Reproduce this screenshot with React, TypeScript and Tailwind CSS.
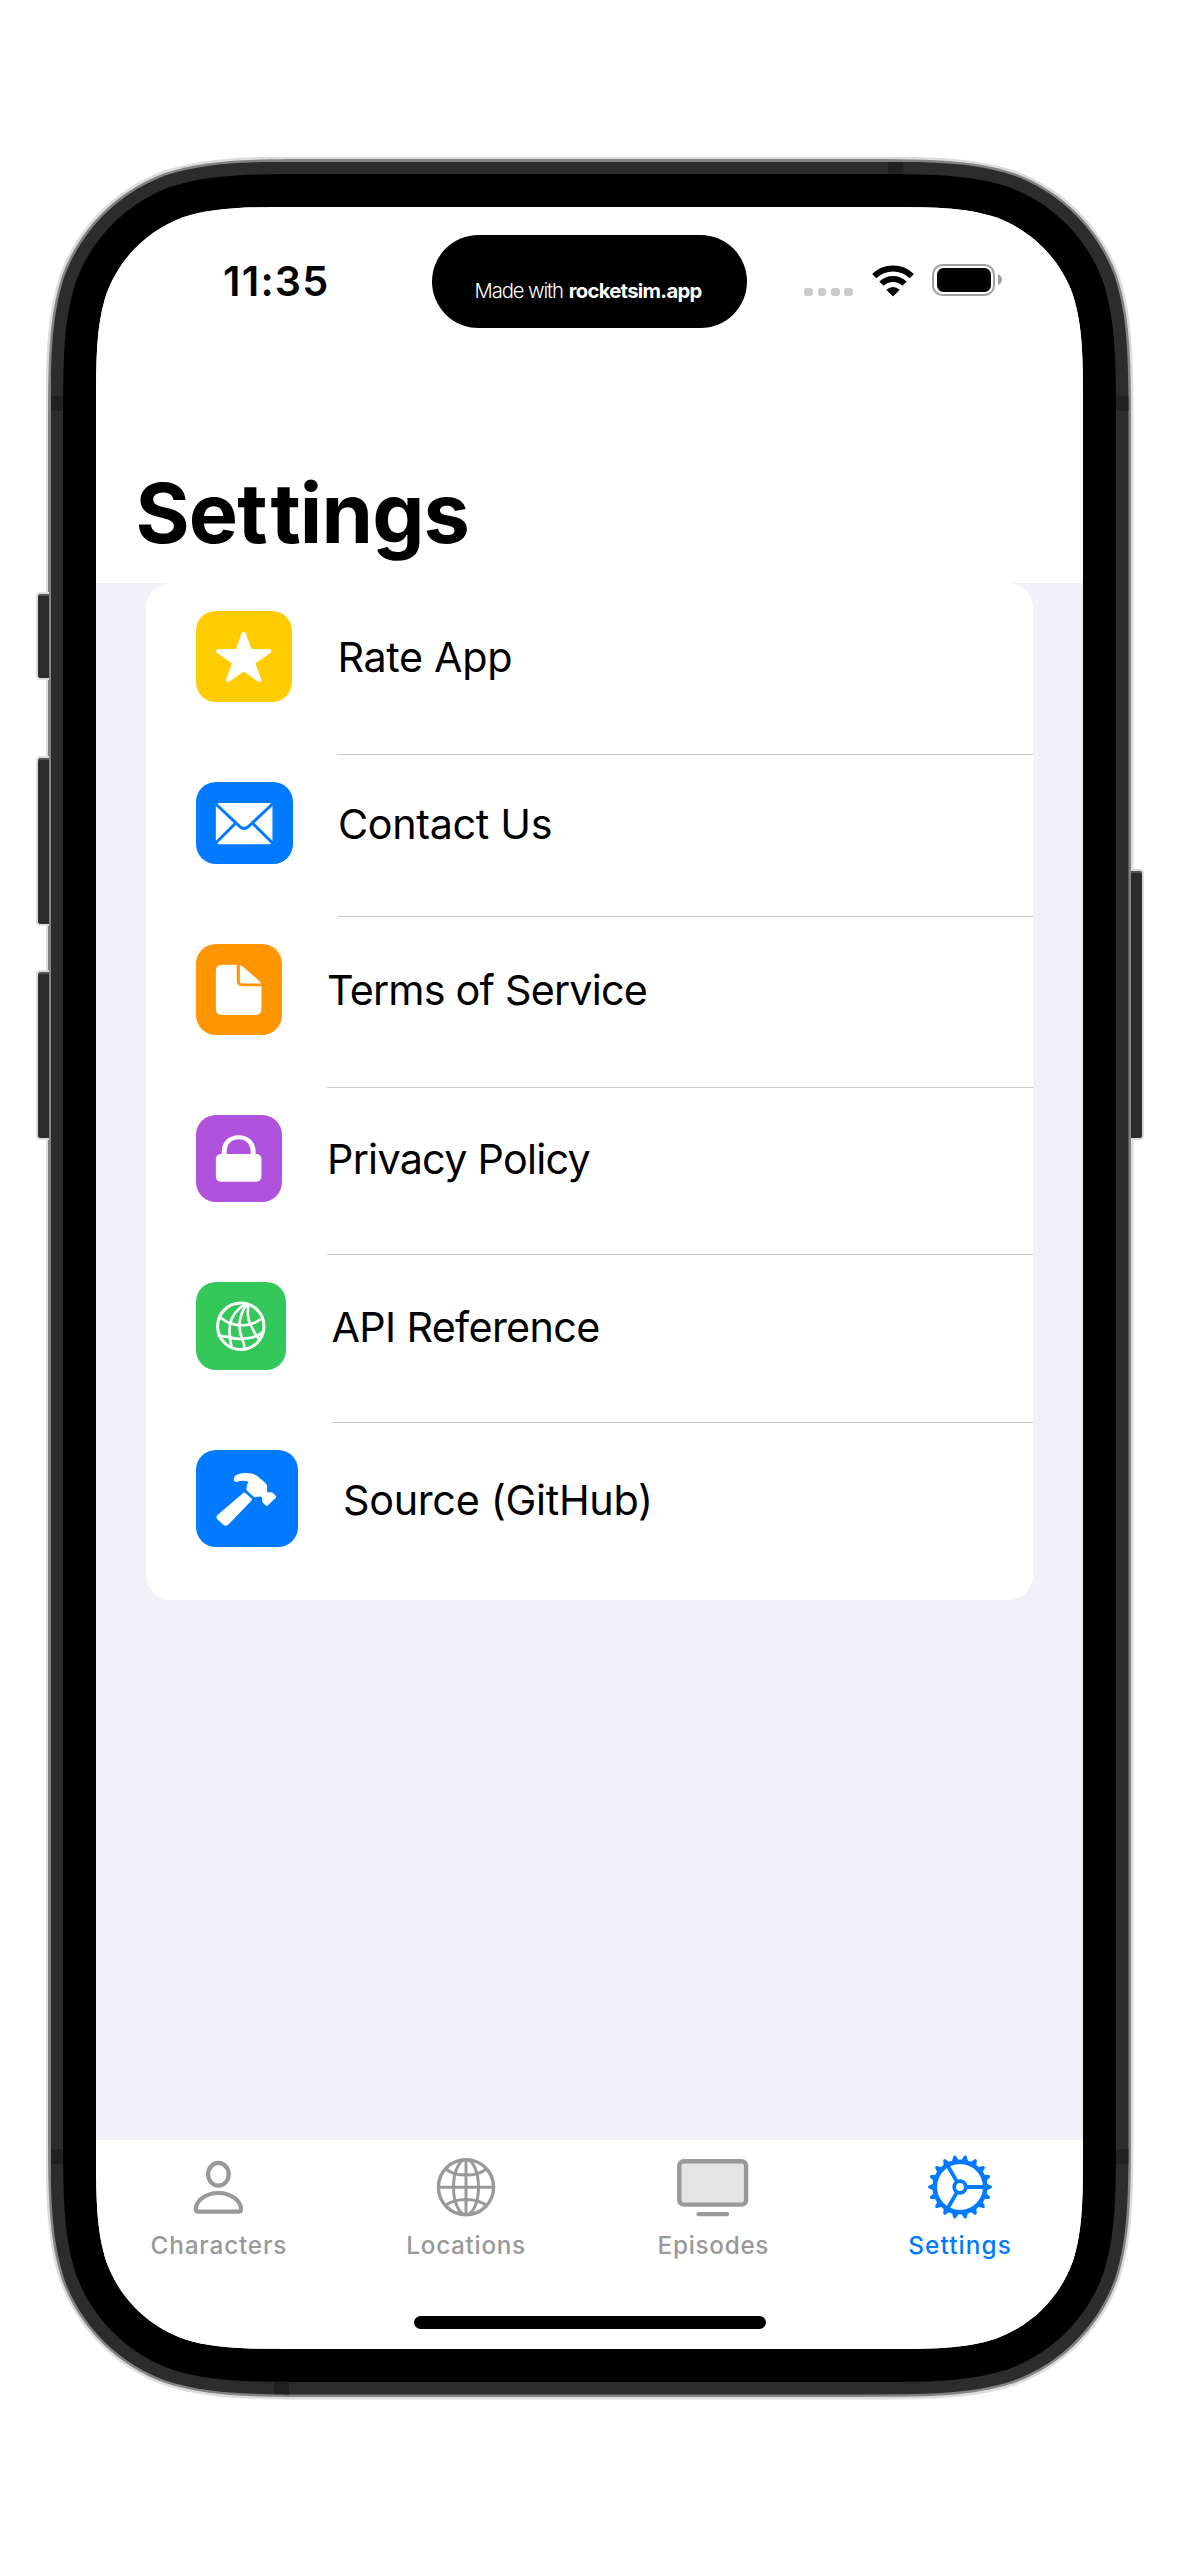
import React from "react";

/** Closed path of a w × h rectangle with continuous (iOS-style) corners of radius r. */
function continuousCorners(w: number, h: number, r: number): string {
  const a = 1.52866483 * r;
  const b = 1.08849323 * r;
  const c = 0.86840689 * r;
  const d = 0.63149399 * r;
  const e = 0.37282392 * r;
  const f = 0.16905899 * r;
  const g = 0.074911 * r;
  return [
    `M${a} 0L${w - a} 0`,
    `C${w - b} 0 ${w - c} 0 ${w - d} ${g}C${w - e} ${f} ${w - f} ${e} ${w - g} ${d}C${w} ${c} ${w} ${b} ${w} ${a}`,
    `L${w} ${h - a}`,
    `C${w} ${h - b} ${w} ${h - c} ${w - g} ${h - d}C${w - f} ${h - e} ${w - e} ${h - f} ${w - d} ${h - g}C${w - c} ${h} ${w - b} ${h} ${w - a} ${h}`,
    `L${a} ${h}`,
    `C${b} ${h} ${c} ${h} ${d} ${h - g}C${e} ${h - f} ${f} ${h - e} ${g} ${h - d}C0 ${h - c} 0 ${h - b} 0 ${h - a}`,
    `L0 ${a}`,
    `C0 ${b} 0 ${c} ${g} ${d}C${f} ${e} ${e} ${f} ${d} ${g}C${c} 0 ${b} 0 ${a} 0Z`,
  ].join("");
}

type LayerProps = {
  w: number;
  h: number;
  r: number;
  className: string;
  children: React.ReactNode;
};

function Layer({ w, h, r, className, children }: LayerProps) {
  return (
    <div
      className={className}
      style={{ width: w, height: h, clipPath: `path("${continuousCorners(w, h, r)}")` }}
    >
      {children}
    </div>
  );
}

/* ---------- Row icons ---------- */

const StarIcon = () => (
  <svg viewBox="0 0 96 91" className="block size-full" fill="#fff" stroke="#fff" strokeWidth="4" strokeLinejoin="round">
    <path d="M47.7 22.6L53.9 39.8L73.3 40.3L57 51.7L63.4 69L47.7 58L32 69L38.4 51.7L22.1 40.3L41.5 39.8Z" />
  </svg>
);

const MailIcon = () => (
  <svg viewBox="0 0 96 82" className="block size-full" fill="none" stroke="#007aff" strokeWidth="3">
    <rect x="19.6" y="21" width="56.6" height="41.3" rx="3.5" fill="#fff" stroke="none" />
    <path d="M19 21.5L43.6 44.6Q47.9 48.4 52.2 44.6L76.8 21.5M39.6 41L19 61.5M56.2 41L76.8 61.5" />
  </svg>
);

const DocumentIcon = () => (
  <svg viewBox="0 0 85 91" className="block size-full" fill="#fff">
    <path d="M19.6 27Q19.6 20.7 26 20.7H40.5V36.5Q40.5 42.2 46 42.2H65.2V64.7Q65.2 71 58.8 71H26Q19.6 71 19.6 64.7Z" />
    <path d="M43.6 21.2Q45 21.4 46.4 22.6L63.4 37.2Q64.6 38.4 64.8 39.4H45.4Q43.6 39.4 43.6 37.6Z" />
  </svg>
);

const LockIcon = () => (
  <svg viewBox="0 0 85 87" className="block size-full" fill="#fff">
    <rect x="19.6" y="39" width="45.6" height="27.7" rx="5" />
    <path d="M25.5 41V37C25.5 26.5 32.5 20.3 42.4 20.3S59.4 26.5 59.4 37V41H54.4V36.5C54.4 29.5 50 24.2 42.4 24.2S30.5 29.5 30.5 36.5V41Z" />
  </svg>
);

const NetworkIcon = () => (
  <svg viewBox="0 0 90 88" className="block size-full" fill="none" stroke="#fff" strokeWidth="2.7">
    <circle cx="44.8" cy="44.3" r="23.2" strokeWidth="3" />
    <path d="M24.5 35.5Q33 42.8 44.5 43.3T64.8 37" />
    <path d="M21.8 53.6Q31 54.4 36 55.9T48 56.6Q60 56 67 50" />
    <path d="M49 22.2Q36.5 30 34 42.5Q32.6 53 35.6 64.8" />
    <path d="M51 22.2Q43.5 32 43.5 43.5Q43.6 51 46 56.6Q48 61 48.8 67" />
    <path d="M52.4 22.4Q50.4 36 55 43.5Q58 51 63.4 57.4" />
  </svg>
);

const HammerIcon = () => (
  <svg viewBox="0 0 102 97" className="block size-full" fill="#fff">
    <path d="M37.9 29.4C37.8 26.5 40 24.8 42.2 24.1C49 21.9 58 22.8 62 26.2L69.8 32.8Q71.2 34.2 71.5 36L71.4 40.4Q71.4 42.2 73 42.4L75 42.2Q76.6 42.1 77.6 43.1L80.2 45.7Q81 46.7 80.2 47.8L72.4 55.4Q71 56.5 69.8 55.4L67 52.6Q66.2 51.7 66.5 50.5L66.6 48.4Q66.4 46.4 64.6 46.4L60.4 47.2Q58.8 47.5 57.6 46.6L51.6 41Q50.3 39.7 50.8 37.6C51.3 35 51.4 33.2 52.8 31.8C49 30.2 45 30.6 40.7 31.8Q38.2 32.1 37.9 29.4Z" />
    <path d="M47.2 43.2Q48.6 41.9 50 43.2L55.6 48.2Q56.8 49.4 55.6 50.8L32.4 75Q29.8 77 27.4 75L21.6 69.6Q19.6 67.4 21.6 65.2Z" />
  </svg>
);

/* ---------- Tab icons ---------- */

const PersonIcon = () => (
  <svg viewBox="0 0 74 74" className="block size-[74px]" fill="none" stroke="currentColor" strokeWidth="4.2">
    <ellipse cx="36.4" cy="24.3" rx="10.3" ry="11.4" />
    <path d="M13.8 59.2C13.8 51.5 22.8 43 36.4 43S59 51.5 59 59.2Q59 61.6 56.8 61.6H16Q13.8 61.6 13.8 59.2Z" />
  </svg>
);

const GlobeIcon = () => (
  <svg viewBox="0 0 74 74" className="block size-[74px]" fill="none" stroke="currentColor" strokeWidth="3">
    <circle cx="37" cy="37.2" r="27.6" strokeWidth="3.4" />
    <ellipse cx="37" cy="37.2" rx="12.5" ry="27.6" />
    <path d="M37 9.5V65M9.5 37.2H64.5M16.5 18.8Q24 25 37 25T57.5 18.8M16.5 55.6Q24 49.4 37 49.4T57.5 55.6" />
  </svg>
);

const TvIcon = () => (
  <svg viewBox="0 0 74 74" className="block size-[74px]" fill="none" stroke="currentColor" strokeWidth="4.4" strokeLinecap="round">
    <rect x="3.3" y="11.2" width="66.8" height="43.4" rx="4.4" fill="#e4e4e4" />
    <path d="M22.5 64.1H51" />
  </svg>
);

const TEETH = Array.from({ length: 18 }, (_, i) => i * 20);

const GearIcon = () => (
  <svg viewBox="0 0 74 74" className="block size-[74px]" fill="none" stroke="currentColor" strokeWidth="3.8">
    <circle cx="37" cy="37" r="25.2" strokeWidth="4.6" />
    <circle cx="37" cy="37" r="5.8" />
    <path d="M44 37H61M33.5 30.9L24.7 15.7M33.5 43.1L24.7 58.3" />
    {TEETH.map((angle) => (
      <path
        key={angle}
        d="M62.5 33.2L68 35.5Q70 37 68 38.5L62.5 40.8Z"
        fill="currentColor"
        stroke="none"
        transform={`rotate(${angle} 37 37)`}
      />
    ))}
  </svg>
);

/* ---------- Data ---------- */

const ROWS = [
  { label: "Rate App", Icon: StarIcon, icon: "w-[96px] h-[91px] bg-[#ffcc00]", row: "h-[171px]", text: "tracking-[-0.35px]" },
  { label: "Contact Us", Icon: MailIcon, icon: "w-[96.5px] h-[82px] bg-[#007aff]", row: "h-[162px]", text: "tracking-[-0.33px]" },
  { label: "Terms of Service", Icon: DocumentIcon, icon: "w-[85.5px] h-[91px] bg-[#ff9500]", row: "h-[171px]", text: "tracking-[-0.78px]" },
  { label: "Privacy Policy", Icon: LockIcon, icon: "w-[85.5px] h-[87px] bg-[#af52de]", row: "h-[167px]", text: "tracking-[-0.73px]" },
  { label: "API Reference", Icon: NetworkIcon, icon: "w-[90px] h-[88px] bg-[#34c759]", row: "h-[168px]", text: "tracking-[-0.67px]" },
  { label: "Source (GitHub)", Icon: HammerIcon, icon: "w-[101.5px] h-[97px] bg-[#007aff]", row: "h-[178px]", text: "tracking-[-0.3px]" },
];

const TABS = [
  { label: "Characters", Icon: PersonIcon, color: "text-[#999999]", text: "tracking-[0.84px] -ml-[1px]" },
  { label: "Locations", Icon: GlobeIcon, color: "text-[#999999]", text: "tracking-[0.7px]" },
  { label: "Episodes", Icon: TvIcon, color: "text-[#999999]", text: "tracking-[0.7px] ml-[1px]" },
  { label: "Settings", Icon: GearIcon, color: "text-[#007aff]", text: "tracking-[1.15px] ml-[1px]" },
];

/* ---------- Sections ---------- */

function StatusBar() {
  return (
    <div className="flex h-[120.5px] shrink-0 items-end">
      <div className="w-[336.3px] pb-[22px] pl-[127px]">
        <span className="block text-[41.3px] leading-[50px] font-semibold tracking-[1.25px]">11:35</span>
      </div>
      <div className="flex h-[92.4px] w-[314.5px] items-start justify-center rounded-full bg-black pt-[43.5px] pr-[3px] text-[20.3px] leading-[24px] whitespace-nowrap text-white">
        <span className="font-light tracking-[-1.13px]">Made with</span>
        <span className="ml-[6px] font-bold tracking-[-0.73px]">rocketsim.app</span>
      </div>
      <div className="flex h-[63px] items-start pl-[57.5px]">
        <div className="mt-[23px] flex gap-[4.7px]">
          {[0, 1, 2, 3].map((i) => (
            <span key={i} className="h-[8.5px] w-[8.7px] rounded-[3px] bg-[#cbcbcb]" />
          ))}
        </div>
        <svg viewBox="0 0 42 32" className="mt-[0.5px] ml-[18.5px] block h-[32px] w-[42px]" fill="none" stroke="#000" strokeWidth="6">
          <path d="M2.2 11.2A27 27 0 0 1 39.8 11.2" />
          <path d="M9.4 18.7A16.6 16.6 0 0 1 32.6 18.7" />
          <path d="M21 31.4L14.3 24.8Q21 19 27.7 24.8Z" fill="#000" stroke="none" />
        </svg>
        <div className="-mt-px ml-[18.8px] flex items-center">
          <div className="h-[32.6px] w-[62.8px] rounded-[10.5px] border-2 border-[#a0a0a0] p-[2.6px]">
            <div className="size-full rounded-[6.5px] bg-black" />
          </div>
          <svg viewBox="0 0 4 11" className="ml-[2.6px] block h-[11px] w-[4px]" fill="#a0a0a0">
            <path d="M0 0Q4 2 4 5.5T0 11Z" />
          </svg>
        </div>
      </div>
    </div>
  );
}

function SettingsList() {
  return (
    <div className="mx-[50px] rounded-[25px] bg-white pl-[50px]">
      {ROWS.map(({ label, Icon, icon, row, text }, i) => (
        <div key={label} className={`flex ${row}`}>
          <div className={`mt-[28px] shrink-0 rounded-[20px] ${icon}`}>
            <Icon />
          </div>
          <div
            className={`-mb-px ml-[45.5px] flex flex-1 items-center pt-[30px] pb-[53px] ${
              i < ROWS.length - 1 ? "border-b border-[#c9c9cb]" : ""
            }`}
          >
            <span className={`text-[41.3px] leading-[50px] whitespace-nowrap ${text}`}>{label}</span>
          </div>
        </div>
      ))}
    </div>
  );
}

function TabBar() {
  return (
    <div className="h-[209px] shrink-0 bg-white pt-[10px]">
      <div className="grid grid-cols-4">
        {TABS.map(({ label, Icon, color, text }) => (
          <div key={label} className={`flex flex-col items-center ${color}`}>
            <Icon />
            <span className={`mt-[5.5px] text-[24.3px] leading-[30px] font-medium ${text}`}>{label}</span>
          </div>
        ))}
      </div>
      <div className="mx-auto mt-[56.7px] h-[12.6px] w-[352px] rounded-full bg-black" />
    </div>
  );
}

const LEFT_BUTTON =
  "absolute -left-[10px] w-[13px] rounded-l-[4px] border-2 border-r-0 border-[#dcdcdc] bg-[#2c2c2c] shadow-[inset_0_2px_0_#555]";
const RIGHT_BUTTON =
  "absolute -right-[10px] w-[13px] rounded-r-[4px] border-2 border-l-0 border-[#dcdcdc] bg-[#2c2c2c] shadow-[inset_0_2px_0_#555]";
const ANTENNA = "absolute bg-[#212121]";

export default function App() {
  return (
    <div className="flex h-[2556px] w-[1179px] items-center justify-center overflow-hidden bg-white font-['Inter',sans-serif] text-black">
      <div className="relative h-[2243px] w-[1088px]">
        <Layer w={1088} h={2243} r={188} className="relative bg-[#dcdcdc] p-[2.5px]">
          <Layer w={1083} h={2238} r={185.5} className="bg-[#838383] p-[2.5px]">
            <Layer w={1078} h={2233} r={183} className="relative bg-[#2c2c2c] px-[12.5px] py-[12.5px]">
              <div className={`${ANTENNA} top-[234px] left-0 h-[15px] w-[13px]`} />
              <div className={`${ANTENNA} top-[234px] right-0 h-[15px] w-[13px]`} />
              <div className={`${ANTENNA} bottom-[231px] left-0 h-[15px] w-[13px]`} />
              <div className={`${ANTENNA} right-0 bottom-[231px] h-[15px] w-[13px]`} />
              <div className={`${ANTENNA} top-0 left-[837px] h-[13px] w-[15px]`} />
              <div className={`${ANTENNA} bottom-0 left-[223.5px] h-[13px] w-[15px]`} />
              <Layer w={1053} h={2208} r={171} className="relative bg-black p-[33px]">
                <Layer w={987} h={2142} r={138} className="flex flex-col bg-[#f2f1f7]">
                  <div className="h-[376px] shrink-0 bg-white">
                    <StatusBar />
                    <h1 className="pt-[135px] pl-[39.5px] text-[82.8px] leading-[100px] font-bold tracking-[-0.85px]">
                      Se<span className="tracking-[2.7px]">t</span>tings
                    </h1>
                  </div>
                  <div className="flex-1">
                    <SettingsList />
                  </div>
                  <TabBar />
                </Layer>
              </Layer>
            </Layer>
          </Layer>
        </Layer>
        <div className={`${LEFT_BUTTON} top-[435px] h-[88px]`} />
        <div className={`${LEFT_BUTTON} top-[599px] h-[170px]`} />
        <div className={`${LEFT_BUTTON} top-[813px] h-[170px]`} />
        <div className={`${RIGHT_BUTTON} top-[712px] h-[271px]`} />
      </div>
    </div>
  );
}
